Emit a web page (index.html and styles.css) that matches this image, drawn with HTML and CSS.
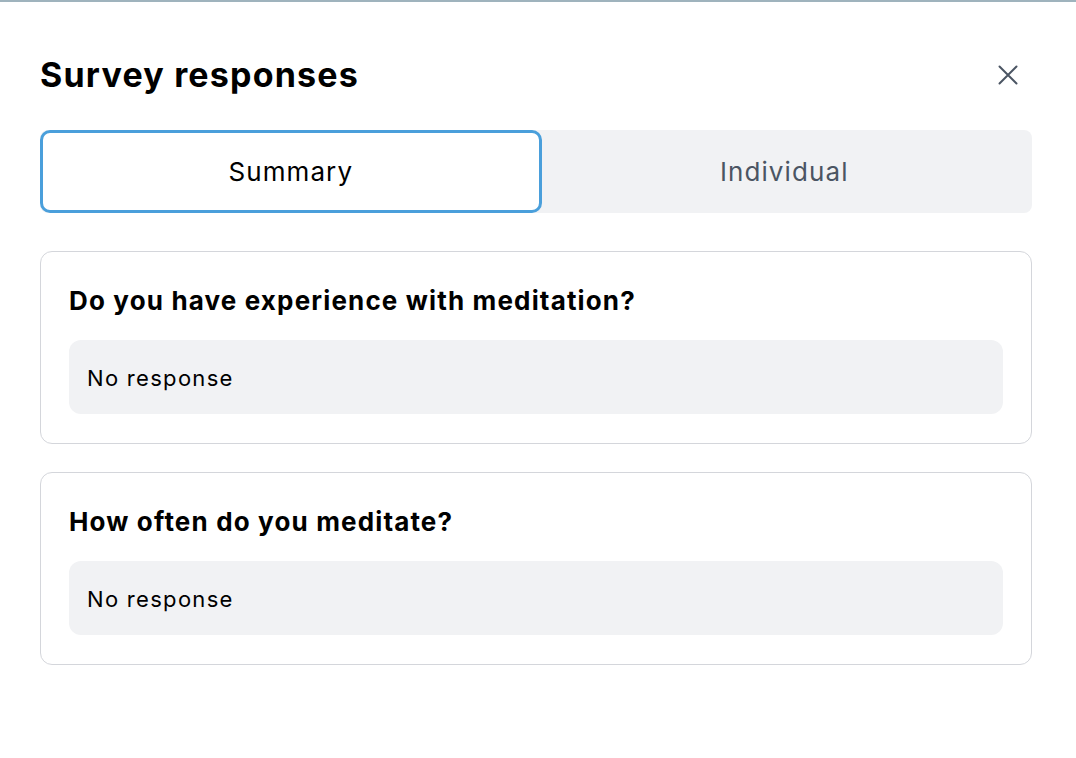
FILE: index.html
```html
<!DOCTYPE html>
<html lang="en">
<head>
    <meta charset="UTF-8">
    <meta name="viewport" content="width=device-width, initial-scale=1.0">
    <title>Survey responses</title>
    <link rel="stylesheet" href="styles.css">
</head>
<body>
    <div class="modal">
        <header class="modal-header">
            <h1 class="modal-title">Survey responses</h1>
            <button class="close-btn" aria-label="Close">
                <svg width="26" height="26" viewBox="0 0 26 26" fill="none" stroke="currentColor" stroke-width="2" stroke-linecap="round">
                    <path d="M4.5 4.5l17 17M21.5 4.5l-17 17"/>
                </svg>
            </button>
        </header>

        <!-- Tabs -->
        <div class="tabs">
            <button class="tab active">Summary</button>
            <button class="tab">Individual</button>
        </div>

        <!-- Questions -->
        <div class="questions">
            <section class="card">
                <h2 class="question">Do you have experience with meditation?</h2>
                <div class="answer">No response</div>
            </section>
            <section class="card">
                <h2 class="question">How often do you meditate?</h2>
                <div class="answer">No response</div>
            </section>
        </div>
    </div>
</body>
</html>
```

FILE: styles.css
```css
body {
    margin: 0;
    padding: 0;
    background-color: #fff;
    font-family: Inter, "Noto Sans", sans-serif;
    color: #000;
    border-top: 2px solid #9fb3bd;
}
.modal {
    padding: 0 44px 0 40px;
}
.modal-header {
    display: flex;
    align-items: center;
    justify-content: space-between;
    height: 128px;
    padding-top: 17px;
    box-sizing: border-box;
}
.modal-title {
    margin: 0;
    font-size: 34px;
    font-weight: 700;
    letter-spacing: 1.2px;
    line-height: 42px;
}
.close-btn {
    background: none;
    border: none;
    padding: 0;
    margin-right: 11px;
    color: #4b5563;
    display: flex;
    cursor: pointer;
}
.tabs {
    display: flex;
    background-color: #f1f2f4;
    border-radius: 8px;
    height: 83px;
}
.tab {
    flex: 1;
    border: none;
    background: none;
    font-family: inherit;
    font-size: 26px;
    letter-spacing: 1.1px;
    color: #4b5563;
    border-radius: 10px;
    cursor: pointer;
}
.tab.active {
    background-color: #fff;
    color: #000;
    border: 3px solid #4a9fdb;
    margin-right: -5px;
}
.questions {
    display: flex;
    flex-direction: column;
    gap: 28px;
    margin-top: 38px;
}
.card {
    border: 1px solid #d4d6db;
    border-radius: 12px;
    padding: 28px 28px 29px;
}
.question {
    margin: 0 0 18px;
    font-size: 26px;
    font-weight: 700;
    letter-spacing: 1.15px;
    line-height: 42px;
}
.answer {
    background-color: #f1f2f4;
    border-radius: 12px;
    height: 74px;
    box-sizing: border-box;
    display: flex;
    align-items: center;
    padding: 2px 18px 0;
    font-size: 22px;
    letter-spacing: 1.3px;
}
```
